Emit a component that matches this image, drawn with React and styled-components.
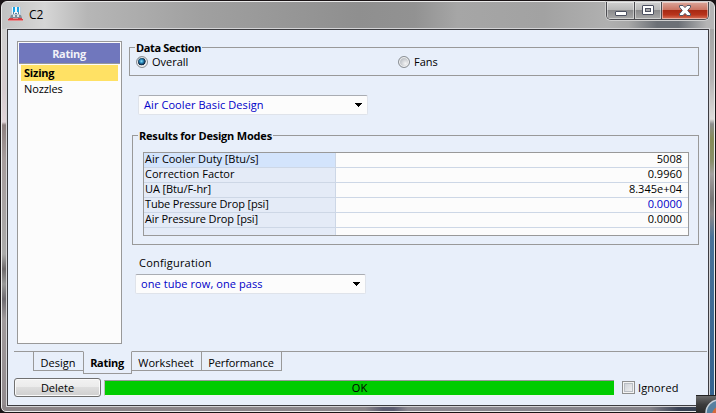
import React from "react";
import styled, { createGlobalStyle, css } from "styled-components";

const GlobalStyle = createGlobalStyle`
  * { box-sizing: border-box; }
  body { margin: 0; overflow: hidden; background: #111; }
`;

const Frame = styled.div`
  width: 716px;
  height: 413px;
  position: relative;
  display: flex;
  flex-direction: column;
  padding: 1px;
  background: #1a1416;
  font: 11px/15px "Open Sans", "Noto Sans", sans-serif;
  color: #000;
  overflow: hidden;
`;

const Glass = styled.div`
  flex: 1;
  display: flex;
  flex-direction: column;
  border: 1px solid #e9e9e9;
  border-radius: 6px 6px 5px 5px;
  padding: 0 5px 5px 5px;
  background:
    linear-gradient(90deg, #8c8588 0, #8a868b 51%, #5c5c70 53.5%, #5c5c70 55%, #8b8890 57%, #85838a 91%, #3a4254 95%, #35404f 100%) 0 100% / 100% 6px no-repeat,
    linear-gradient(180deg, #a5a5a5 0, #b5b3b3 50px, #dedcda 90px, #8d8d8d 95px, #868c58 110px, #8a8f6a 132px, #a4a0a0 145px, #777 170px, #8d8a8a 185px, #4a7399 208px, #2f5f8d 100%) 100% 27px / 6px 100% no-repeat,
    linear-gradient(180deg, #cfcfcf 0, #d5cbcf 60px, #e0d4d8 93px, #8d8080 96px, #a69c9c 130px, #aaa 225px, #6e6a6c 240px, #999 255px, #6e6a70 270px, #a09a9c 290px, #8c8588 100%) 0 27px / 6px 100% no-repeat,
    linear-gradient(90deg, #c2c2c2 0, #d6d6d6 6%, #b6b6b6 12%, #a0a0a0 28%, #8f8f8f 50%, #929292 58%, #a6a6a6 64%, #a2a2a2 76%, #b0b0b0 85%, #a8a8a8 88%, #6c7076 92%, #6c7076 95%, #b5b5b5 99%);
`;

const TitleBar = styled.header`
  height: 27px;
  display: flex;
  align-items: flex-start;
`;

const Title = styled.span`
  margin: 4px 0 0 6px;
  font-size: 12px;
  line-height: 18px;
`;

const WindowButtons = styled.div`
  margin-left: auto;
  display: flex;
  height: 18px;
  border: 1px solid #4b4b50;
  border-top: 0;
  border-radius: 0 0 5px 5px;
  overflow: hidden;
  box-shadow: 0 0 0 1px #cfcfcf;
`;

const WindowButton = styled.button`
  width: ${(p) => p.$w}px;
  padding: 0 0 1px;
  border: 0;
  display: flex;
  align-items: center;
  justify-content: center;
  box-shadow: inset 0 0 0 1px rgba(255, 255, 255, 0.45);
  background: ${(p) =>
    p.$danger
      ? "linear-gradient(#dba79b 0, #cb7563 45%, #a82a14 50%, #b8341c 75%, #d8745c 100%)"
      : "linear-gradient(#d0d0d0 0, #b9b9b9 45%, #8b8b8d 50%, #a8a8a8 100%)"};
  & + & { border-left: 1px solid #4b4b50; }
`;

const Client = styled.main`
  flex: 1;
  display: flex;
  flex-direction: column;
  border: 1px solid #3c3c40;
  outline: 1px solid #d4d4d6;
  background: #e8effa;
`;

const Workspace = styled.div`
  height: 321px;
  display: flex;
  padding: 11px 9px 0;
`;

const Sidebar = styled.nav`
  width: 105px;
  height: 303px;
  padding: 1px;
  border: 1px solid #999;
  background: #fcfcfc;
`;

const SidebarTitle = styled.div`
  height: 21px;
  border-bottom: 1px solid #999;
  background: #7077bd;
  color: #f2f2f8;
  font-weight: 700;
  line-height: 22px;
  text-align: center;
  text-indent: -1px;
  letter-spacing: -0.3px;
`;

const SidebarItem = styled.div`
  height: 16px;
  margin: ${(p) => (p.$active ? "1px 2px 0" : "0 2px")};
  padding-left: 3px;
  line-height: 15px;
  background: ${(p) => (p.$active ? "#ffe164" : "transparent")};
  font-weight: ${(p) => (p.$active ? 700 : 400)};
  letter-spacing: ${(p) => (p.$active ? "-0.2px" : "-0.1px")};
`;

const Content = styled.section`
  flex: 1;
  padding: 6px 0 0 7px;
  display: flex;
  flex-direction: column;
`;

const Group = styled.fieldset`
  position: relative;
  margin: ${(p) => p.$margin};
  padding: 0;
  height: ${(p) => p.$h}px;
  min-width: 0;
  border: 1px solid #999;
`;

const GroupTitle = styled.span`
  position: absolute;
  top: -8px;
  left: 5px;
  padding: 0 1px;
  background: #e8effa;
  font-weight: 700;
  white-space: nowrap;
  letter-spacing: ${(p) => p.$track}px;
`;

const RadioRow = styled.div`
  display: grid;
  grid-template-columns: 262px 1fr;
  padding: 7px 0 0 6px;
`;

const RadioLabel = styled.label`
  display: flex;
  align-items: flex-start;
  gap: 4px;
  height: 14px;
  line-height: 13px;
`;

const RadioDot = styled.span`
  width: 12px;
  height: 12px;
  margin-top: 1px;
  border: 1px solid #8a8f94;
  border-radius: 50%;
  box-shadow: inset 0 0 0 1px #f4f4f4;
  background: ${(p) =>
    p.$checked
      ? "radial-gradient(circle at 45% 42%, #8fe0f8 0, #2a8fc2 1.7px, #12304f 3.4px, #16304c 3.9px, #d9dcdf 4.4px)"
      : "radial-gradient(circle at 65% 65%, #f4f4f4 0, #c3c7cc 5px)"};
`;

const Select = styled.div`
  width: ${(p) => p.$w}px;
  height: 20px;
  margin: ${(p) => p.$margin};
  padding: 0 4px 1px 5px;
  display: flex;
  justify-content: space-between;
  align-items: center;
  border: 1px solid #dfe3ea;
  border-top-color: #a9acb2;
  border-radius: 2px;
  background: #fcfcfc;
  color: #0000c8;
  line-height: 18px;
  letter-spacing: 0.08px;
  svg { margin-top: 2px; }
`;

const Results = styled.div`
  height: 84px;
  margin: 16px 9px 0 10px;
  border: 1px solid #999;
  background: #fcfcfc;
  display: grid;
  grid-template-columns: 192px 1fr;
  grid-template-rows: repeat(5, 15px) 1fr;
  overflow: hidden;
`;

const cell = css`
  border-bottom: 1px solid #cdd7e6;
  line-height: 12px;
  white-space: nowrap;
  &:nth-last-child(-n + 2) { border-bottom: 0; }
`;

const NameCell = styled.div`
  ${cell}
  padding-left: 1px;
  border-right: 1px solid #cdd7e6;
  background: ${(p) => (p.$active ? "#d3e4fc" : "#e4ebf7")};
  letter-spacing: ${(p) => p.$track}px;
`;

const ValueCell = styled.div`
  ${cell}
  padding-right: 6px;
  text-align: right;
  color: ${(p) => (p.$input ? "#0000c8" : "#000")};
`;

const FieldLabel = styled.div`
  margin: 10px 0 0 10px;
  letter-spacing: 0.2px;
`;

const Tabs = styled.div`
  height: 27px;
  margin: 0 1px 0 6px;
  padding-left: 19px;
  display: flex;
  align-items: flex-start;
  border-top: 1px solid #999;
`;

const Tab = styled.div`
  width: ${(p) => p.$w}px;
  height: ${(p) => (p.$active ? 23 : 20)}px;
  margin: ${(p) => (p.$active ? "-1px -1px 0 -1px" : "-1px 0 0")};
  padding: 3px 1px 0 0;
  border: 1px solid #999;
  ${(p) => p.$active && "border-top-color: #e8effa; z-index: 1;"}
  background: #e8effa;
  font-weight: ${(p) => (p.$active ? 700 : 400)};
  text-align: center;
  white-space: nowrap;
  letter-spacing: ${(p) => p.$track || 0}px;
  &:last-child { margin-left: -1px; }
`;

const Footer = styled.footer`
  display: flex;
  align-items: flex-start;
  padding-left: 6px;
`;

const DeleteButton = styled.button`
  width: 87px;
  height: 19px;
  padding: 0;
  border: 1px solid #707070;
  border-radius: 3px;
  box-shadow: inset 0 0 0 1px #fafafa;
  background: linear-gradient(#f2f2f2 0, #ebebeb 48%, #dddddd 50%, #cfcfcf 100%);
  font: inherit;
  line-height: 17px;
  color: #000;
`;

const Status = styled.div`
  width: 510px;
  height: 16px;
  margin: 2px 8px 0 3px;
  border-top: 1px solid #999;
  border-left: 1px solid #bbb;
  border-bottom: 1px solid #eef4ee;
  background: #00cc00;
  text-align: center;
  line-height: 14px;
`;

const CheckLabel = styled.label`
  display: flex;
  align-items: center;
  gap: 3px;
  margin-top: 3px;
  height: 13px;
  letter-spacing: 0.1px;
`;

const CheckBox = styled.span`
  width: 13px;
  height: 13px;
  border: 1px solid #8e8f8f;
  box-shadow: inset 0 0 0 1px #f4f4f4, inset 0 0 0 2px #b9bec4;
  background: linear-gradient(135deg, #c8ccd2, #f6f6f6);
`;

const CornerOverlay = styled.div`
  position: absolute;
  right: 0;
  bottom: 0;
  width: 20px;
  height: 18px;
  overflow: hidden;
  border-top: 1px solid #222;
  background: linear-gradient(#6a6a6a, #3c3c3c 50%, #2a2a2a);
  svg { display: block; }
`;

const IconBox = styled.span`
  display: flex;
  margin: 5px 0 0 1px;
`;

const CoolerIcon = () => (
  <IconBox>
    <svg width="15" height="15" viewBox="0 0 15 15">
      <path d="M3 0h10v8H3z" fill="#b9cbd8" />
      <path d="M4 0h8v7H4z" fill="#f0f6fa" />
      <path d="M5 0h2v5H5zM9 0h2v5H9z" fill="#18a4e6" />
      <path d="M5 5h1v2H5zM7 6h2v1H7zM10 5h1v2h-1z" fill="#5b84a3" />
      <path d="M3 8h10l1 3H2z" fill="#7d8d9a" />
      <path d="M5 8h2v2H5zM9 8h2v2H9z" fill="#dfe6ea" />
      <path d="M1 11h4v1H1zM10 11h4v1h-4zM0 12h15v1H0z" fill="#d73e43" />
      <path d="M5 11h5v1H5zM0 13h15v1H0z" fill="#e58a8c" />
    </svg>
  </IconBox>
);

const MinimizeIcon = () => (
  <svg width="12" height="13" viewBox="0 0 12 13">
    <rect x=".5" y="7.5" width="11" height="4" rx=".5" fill="#fff" stroke="#4c5060" />
  </svg>
);

const MaximizeIcon = () => (
  <svg width="12" height="10" viewBox="0 0 12 10">
    <rect x=".5" y=".5" width="11" height="9" rx=".5" fill="#fff" stroke="#4c5060" />
    <rect x="3.5" y="3.5" width="5" height="3" fill="#a7a7a9" stroke="#4c5060" />
  </svg>
);

const CloseIcon = () => (
  <svg width="12" height="11" viewBox="0 0 12 11">
    <path
      d="M.5.5H4l2 2.100L8 .5h3.500v1.700L8.700 5.500l2.800 3.300v1.700H8L6 8.400 4 10.500H.5V8.800l2.800-3.300L.5 2.200z"
      fill="#fff"
      stroke="#535666"
      strokeLinejoin="round"
    />
  </svg>
);

const Arrow = () => (
  <svg width="8" height="5" viewBox="0 0 8 5" shapeRendering="crispEdges">
    <path d="M0 0h7v1H0zM1 1h5v1H1zM2 2h3v1H2zM3 3h1v1H3z" />
  </svg>
);

const rows = [
  { name: "Air Cooler Duty [Btu/s]", value: "5008", active: true, track: -0.05 },
  { name: "Correction Factor", value: "0.9960", track: 0.03 },
  { name: "UA [Btu/F-hr]", value: "8.345e+04", track: -0.1 },
  { name: "Tube Pressure Drop [psi]", value: "0.0000", input: true, track: -0.15 },
  { name: "Air Pressure Drop [psi]", value: "0.0000", track: -0.12 },
];

export default function App() {
  return (
    <>
      <GlobalStyle />
      <Frame>
        <Glass>
          <TitleBar>
            <CoolerIcon />
            <Title>C2</Title>
            <WindowButtons>
              <WindowButton $w={27} aria-label="Minimize"><MinimizeIcon /></WindowButton>
              <WindowButton $w={27} aria-label="Maximize"><MaximizeIcon /></WindowButton>
              <WindowButton $w={47} $danger aria-label="Close"><CloseIcon /></WindowButton>
            </WindowButtons>
          </TitleBar>
          <Client>
            <Workspace>
              <Sidebar>
                <SidebarTitle>Rating</SidebarTitle>
                <SidebarItem $active>Sizing</SidebarItem>
                <SidebarItem>Nozzles</SidebarItem>
              </Sidebar>
              <Content>
                <Group $h={29} $margin="0">
                  <GroupTitle $track={-0.36}>Data Section</GroupTitle>
                  <RadioRow>
                    <RadioLabel><RadioDot $checked />Overall</RadioLabel>
                    <RadioLabel><RadioDot />Fans</RadioLabel>
                  </RadioRow>
                </Group>
                <Select $w={230} $margin="19px 0 0 9px">Air Cooler Basic Design<Arrow /></Select>
                <Group $h={110} $margin="20px 0 0 3px">
                  <GroupTitle $track={-0.2}>Results for Design Modes</GroupTitle>
                  <Results>
                    {rows.map((r) => (
                      <React.Fragment key={r.name}>
                        <NameCell $active={r.active} $track={r.track}>{r.name}</NameCell>
                        <ValueCell $input={r.input}>{r.value}</ValueCell>
                      </React.Fragment>
                    ))}
                    <NameCell $track={0} />
                    <ValueCell />
                  </Results>
                </Group>
                <FieldLabel>Configuration</FieldLabel>
                <Select $w={231} $margin="4px 0 0 6px">one tube row, one pass<Arrow /></Select>
              </Content>
            </Workspace>
            <Tabs>
              <Tab $w={51}>Design</Tab>
              <Tab $w={49} $active $track={-0.3}>Rating</Tab>
              <Tab $w={71}>Worksheet</Tab>
              <Tab $w={81} $track={-0.1}>Performance</Tab>
            </Tabs>
            <Footer>
              <DeleteButton>Delete</DeleteButton>
              <Status>OK</Status>
              <CheckLabel><CheckBox />Ignored</CheckLabel>
            </Footer>
          </Client>
        </Glass>
        <CornerOverlay>
          <svg width="20" height="18" viewBox="0 0 20 18">
            <circle cx="23" cy="17" r="13" fill="#5680a0" stroke="#c9d3dc" strokeWidth="1.5" />
            <circle cx="25" cy="19" r="9" fill="#d4693c" />
          </svg>
        </CornerOverlay>
      </Frame>
    </>
  );
}
